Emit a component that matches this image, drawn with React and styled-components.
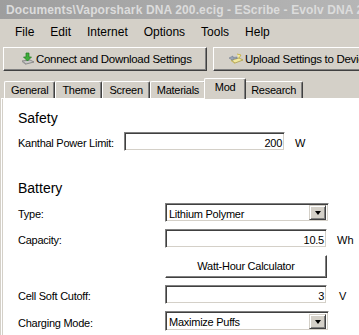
import React from "react";
import styled, { createGlobalStyle } from "styled-components";

const GlobalStyle = createGlobalStyle`
  html, body { margin: 0; padding: 0; }
  body {
    width: 359px;
    height: 335px;
    overflow: hidden;
    background: #d4d0c8;
    font-family: "Liberation Sans", Arial, sans-serif;
  }
`;

const Window = styled.div`
  width: 359px;
  height: 335px;
  display: flex;
  flex-direction: column;
  overflow: hidden;
  background: #d4d0c8;
`;

const TitleBar = styled.div`
  height: 19px;
  flex: none;
  display: flex;
  align-items: center;
  gap: 3px;
  padding-left: 3px;
  background: linear-gradient(90deg, #9e9e9e, #b6b6b6);
  white-space: nowrap;
  overflow: hidden;
`;

const TitleText = styled.span`
  font: bold 12px/14px "Liberation Sans", Arial, sans-serif;
  letter-spacing: 0.12px;
  color: #dcdcdc;
`;

const MenuBar = styled.div`
  height: 26px;
  flex: none;
  display: flex;
  align-items: center;
  padding-left: 7px;
`;

const MenuItem = styled.span`
  font-size: 12px;
  line-height: 14px;
  padding: 0 8px;
  color: #000;
`;

const Toolbar = styled.div`
  height: 27px;
  flex: none;
  display: flex;
  gap: 6px;
  padding: 2px 0 0 3px;
  box-sizing: border-box;
  white-space: nowrap;
`;

const ToolButton = styled.div`
  flex: none;
  width: ${(p) => p.$width}px;
  height: 24px;
  box-sizing: border-box;
  display: flex;
  align-items: center;
  gap: ${(p) => p.$gap}px;
  padding-left: ${(p) => p.$pad}px;
  background: #d4d0c8;
  border-top: 1px solid #fff;
  border-left: 1px solid #fff;
  border-right: 1px solid #404040;
  border-bottom: 1px solid #404040;
  box-shadow: inset -1px -1px 0 #808080;
  font-size: 11.5px;
  line-height: 14px;
  letter-spacing: -0.3px;
  color: #000;
  overflow: hidden;
`;

const TabStrip = styled.div`
  height: 20px;
  flex: none;
  margin-top: 6px;
  display: flex;
  align-items: flex-end;
  padding-left: 4px;
`;

const Tab = styled.div`
  position: relative;
  z-index: ${(p) => (p.$active ? 2 : 1)};
  height: ${(p) => (p.$active ? 21 : 17)}px;
  min-width: 42px;
  margin: ${(p) => (p.$active ? "0 -2px -1px -2px" : "0")};
  padding: 0 6px ${(p) => (p.$active ? 3 : 0)}px;
  box-sizing: border-box;
  display: flex;
  align-items: center;
  justify-content: center;
  background: #d4d0c8;
  border-top: 1px solid #fff;
  border-left: 1px solid #fff;
  border-right: 1px solid #404040;
  box-shadow: inset -1px 0 0 #808080;
  border-radius: 2px 2px 0 0;
  font-size: 11px;
  line-height: 13px;
  letter-spacing: -0.25px;
  color: #000;
`;

const Panel = styled.div`
  flex: 1;
  margin-left: 1px;
  background: #fff;
  border-left: 1px solid #fff;
  border-top: 1px solid #fff;
  box-shadow: inset 1px 0 0 #d4d0c8;
  padding: 11px 0 0 16px;
  display: flex;
  flex-direction: column;
`;

const SectionTitle = styled.div`
  font-size: 14px;
  line-height: 17px;
  color: #000;
  margin-top: ${(p) => p.$mt || 0}px;
`;

const Form = styled.div`
  display: grid;
  grid-template-columns: ${(p) => p.$label}px auto auto;
  justify-content: start;
  align-items: center;
  row-gap: 7px;
  margin-top: ${(p) => p.$mt}px;
`;

const Label = styled.div`
  font-size: 11px;
  line-height: 13px;
  letter-spacing: -0.25px;
  padding-top: 4px;
  color: #000;
  white-space: nowrap;
`;

const Sunken = styled.div`
  box-sizing: border-box;
  width: ${(p) => p.$width}px;
  height: ${(p) => p.$height || 19}px;
  background: #fff;
  border-top: 1px solid #808080;
  border-left: 1px solid #808080;
  border-right: 1px solid #fff;
  border-bottom: 1px solid #fff;
  box-shadow: inset 1px 1px 0 #404040, inset -1px -1px 0 #d4d0c8;
  display: flex;
  align-items: center;
  font-size: 11px;
  line-height: 13px;
  letter-spacing: -0.25px;
  color: #000;
`;

const NumberBox = styled(Sunken)`
  justify-content: flex-end;
  padding: 3px 2px 0 0;
`;

const SelectBox = styled(Sunken)`
  justify-content: space-between;
  padding: 0 2px 0 3px;
`;

const SelectText = styled.span`
  padding-top: 3px;
`;

const DropButton = styled.div`
  width: 17px;
  height: 15px;
  box-sizing: border-box;
  background: #d4d0c8;
  border-top: 1px solid #d4d0c8;
  border-left: 1px solid #d4d0c8;
  border-right: 1px solid #404040;
  border-bottom: 1px solid #404040;
  box-shadow: inset 1px 1px 0 #fff, inset -1px -1px 0 #808080;
  display: flex;
  align-items: center;
  justify-content: center;
`;

const Arrow = styled.div`
  width: 0;
  height: 0;
  border-left: 3.5px solid transparent;
  border-right: 3.5px solid transparent;
  border-top: 4px solid #000;
  margin-top: 1px;
`;

const Unit = styled.div`
  font-size: 11px;
  line-height: 13px;
  padding: 4px 0 0 ${(p) => p.$gap}px;
  color: #000;
`;

const FormButton = styled.div`
  grid-column: 2;
  width: 162px;
  height: 23px;
  box-sizing: border-box;
  background: #fff;
  border-top: 1px solid #fff;
  border-left: 1px solid #fff;
  border-right: 1px solid #404040;
  border-bottom: 1px solid #404040;
  box-shadow: inset -1px -1px 0 #808080;
  display: flex;
  align-items: center;
  justify-content: center;
  font-size: 11px;
  line-height: 13px;
  letter-spacing: -0.25px;
  color: #000;
`;

const AppIcon = () => (
  <svg width="16" height="16" viewBox="0 0 16 16">
    <g fill="none" stroke="#3a3a3a" strokeWidth="1">
      <ellipse cx="8" cy="8" rx="7" ry="2.6" />
      <ellipse cx="8" cy="8" rx="7" ry="2.6" transform="rotate(60 8 8)" />
      <ellipse cx="8" cy="8" rx="7" ry="2.6" transform="rotate(-60 8 8)" />
    </g>
    <circle cx="8" cy="8" r="1.6" fill="#2a2a2a" />
  </svg>
);

const DownloadIcon = () => (
  <svg width="14" height="14" viewBox="0 0 14 14">
    <path d="M1 9 L9 8 L13 10 L5 12 Z" fill="#c8c8c8" stroke="#7a7a7a" strokeWidth="0.8" />
    <path d="M1 9 L5 12 L5 13 L1 10 Z" fill="#9a9a9a" />
    <path d="M5 1 H8 V5 H10.5 L6.5 9 L2.5 5 H5 Z" fill="#3fae3a" stroke="#1f7a1f" strokeWidth="0.7" />
  </svg>
);

const UploadIcon = () => (
  <svg width="16" height="14" viewBox="0 0 16 14">
    <path d="M3 8 L11 6 L15 8 L7 11 Z" fill="#f2e9a0" stroke="#a89a4a" strokeWidth="0.8" />
    <path d="M3 8 L7 11 L7 12 L3 9 Z" fill="#c9b860" />
    <path d="M9 2 L13 3 L11 6" fill="#f7ef9a" stroke="#c0a83a" strokeWidth="0.8" />
    <path d="M1 6 L5 4 L5 5.5 L9 5 L9 6.5 L5 7 L5 8.5 Z" fill="#9aa6b8" stroke="#6b7486" strokeWidth="0.5" />
  </svg>
);

const menus = ["File", "Edit", "Internet", "Options", "Tools", "Help"];
const tabs = ["General", "Theme", "Screen", "Materials", "Mod", "Research"];

export default function App() {
  return (
    <>
      <GlobalStyle />
      <Window>
        <TitleBar>
          <AppIcon />
          <TitleText>{"Documents\\Vaporshark DNA 200.ecig - EScribe - Evolv DNA 200"}</TitleText>
        </TitleBar>
        <MenuBar>
          {menus.map((m) => (
            <MenuItem key={m}>{m}</MenuItem>
          ))}
        </MenuBar>
        <Toolbar>
          <ToolButton $width={204} $pad={17} $gap={1}>
            <DownloadIcon />
            Connect and Download Settings
          </ToolButton>
          <ToolButton $width={200} $pad={14} $gap={1}>
            <UploadIcon />
            Upload Settings to Device
          </ToolButton>
        </Toolbar>
        <TabStrip>
          {tabs.map((t) => (
            <Tab key={t} $active={t === "Mod"}>
              {t}
            </Tab>
          ))}
        </TabStrip>
        <Panel>
          <SectionTitle>Safety</SectionTitle>
          <Form $label={106} $mt={5}>
            <Label>Kanthal Power Limit:</Label>
            <NumberBox $width={161}>200</NumberBox>
            <Unit $gap={10}>W</Unit>
          </Form>
          <SectionTitle $mt={29}>Battery</SectionTitle>
          <Form $label={147} $mt={6}>
            <Label>Type:</Label>
            <SelectBox $width={164}>
              <SelectText>Lithium Polymer</SelectText>
              <DropButton>
                <Arrow />
              </DropButton>
            </SelectBox>
            <span />
            <Label>Capacity:</Label>
            <NumberBox $width={162}>10.5</NumberBox>
            <Unit $gap={8}>Wh</Unit>
            <FormButton>Watt-Hour Calculator</FormButton>
            <span />
            <Label>Cell Soft Cutoff:</Label>
            <NumberBox $width={162}>3</NumberBox>
            <Unit $gap={10}>V</Unit>
            <Label>Charging Mode:</Label>
            <SelectBox $width={164} $height={20}>
              <SelectText>Maximize Puffs</SelectText>
              <DropButton>
                <Arrow />
              </DropButton>
            </SelectBox>
            <span />
          </Form>
        </Panel>
      </Window>
    </>
  );
}
